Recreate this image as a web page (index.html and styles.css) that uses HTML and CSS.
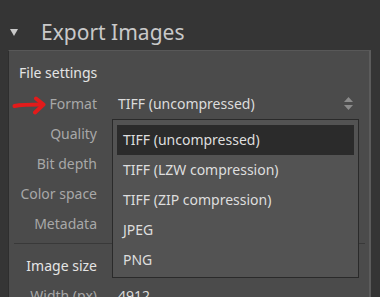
FILE: index.html
```html
<!DOCTYPE html>
<html lang="en">
<head>
    <meta charset="UTF-8">
    <title>Export Images</title>
    <link rel="stylesheet" href="styles.css">
</head>
<body>
    <div class="header">
        <svg class="twisty" width="8" height="7" viewBox="0 0 8 7"><polygon points="0,0 8,0 4,7" fill="#c9c9c9"/></svg>
        <span class="title">Export Images</span>
    </div>

    <div class="panel">
        <div class="section-title">File settings</div>

        <div class="rows">
            <div class="label">Format</div>
            <div class="value select">
                <span>TIFF (uncompressed)</span>
                <svg class="spin" width="9" height="14" viewBox="0 0 9 14"><polygon points="4.5,0 9,5 0,5" fill="#8c8c8c"/><polygon points="0,8 9,8 4.5,13" fill="#8c8c8c"/></svg>
            </div>
            <div class="label">Quality</div>
            <div class="value"></div>
            <div class="label">Bit depth</div>
            <div class="value"></div>
            <div class="label">Color space</div>
            <div class="value"></div>
            <div class="label">Metadata</div>
            <div class="value"></div>
        </div>

        <div class="divider"></div>

        <div class="rows">
            <div class="label section">Image size</div>
            <div class="value"></div>
            <div class="label">Width (px)</div>
            <div class="value">4912</div>
        </div>

        <!-- annotation arrow -->
        <svg class="pointer" width="34" height="20" viewBox="0 0 34 20">
            <path d="M2.5 10 C10 8.5 20 8.5 30 8.5" stroke="#e31b1b" stroke-width="4" fill="none" stroke-linecap="round"/>
            <path d="M24 2.5 L31.5 8.5 L23 16.5" stroke="#e31b1b" stroke-width="4" fill="none" stroke-linecap="round" stroke-linejoin="round"/>
        </svg>

        <ul class="menu">
            <li class="selected">TIFF (uncompressed)</li>
            <li>TIFF (LZW compression)</li>
            <li>TIFF (ZIP compression)</li>
            <li>JPEG</li>
            <li>PNG</li>
        </ul>
    </div>
</body>
</html>
```

FILE: styles.css
```css
body {
    margin: 0;
    background: #353535;
    font-family: "Noto Sans", "Open Sans", sans-serif;
    color: #dcdcdc;
    overflow: hidden;
}
.header {
    height: 36px;
    padding-top: 14px;
    display: flex;
    align-items: center;
    padding-left: 10px;
}
.title {
    margin-left: 23px;
    font-size: 21px;
    color: #c9c9c9;
}
.panel {
    position: relative;
    margin-left: 8px;
    width: 360px;
    height: 234px;
    background: #4b4b4b;
    border-left: 1px solid #2e2e2e;
    border-top: 1px solid #585858;
    border-right: 2px solid #5c5c5c;
    padding-top: 12px;
    overflow: hidden;
}
.section-title {
    padding-left: 10px;
    font-size: 14px;
    line-height: 20px;
    color: #e4e4e4;
}
.rows {
    display: grid;
    grid-template-columns: 88px 1fr;
    grid-auto-rows: 30px;
    column-gap: 21px;
    margin-top: 6px;
}
.label {
    text-align: right;
    font-size: 14px;
    line-height: 30px;
    color: #a8a8a8;
}
.label.section {
    color: #e4e4e4;
}
.value {
    font-size: 14px;
    line-height: 30px;
    color: #dcdcdc;
}
.select {
    display: flex;
    align-items: center;
    justify-content: space-between;
    padding-right: 16px;
}
.divider {
    margin: 4px 4px 7px 5px;
    height: 1px;
    background: #393939;
}
.pointer {
    position: absolute;
    left: 3px;
    top: 45px;
}
.menu {
    position: absolute;
    left: 103px;
    top: 68px;
    width: 237px;
    margin: 0;
    padding: 5px 4px 2px 4px;
    list-style: none;
    background: #535353;
    border: 1px solid #2a2a2a;
}
.menu li {
    height: 30px;
    line-height: 30px;
    padding-left: 6px;
    font-size: 14px;
    color: #dedede;
}
.menu li.selected {
    background: #2b2b2b;
}
```
